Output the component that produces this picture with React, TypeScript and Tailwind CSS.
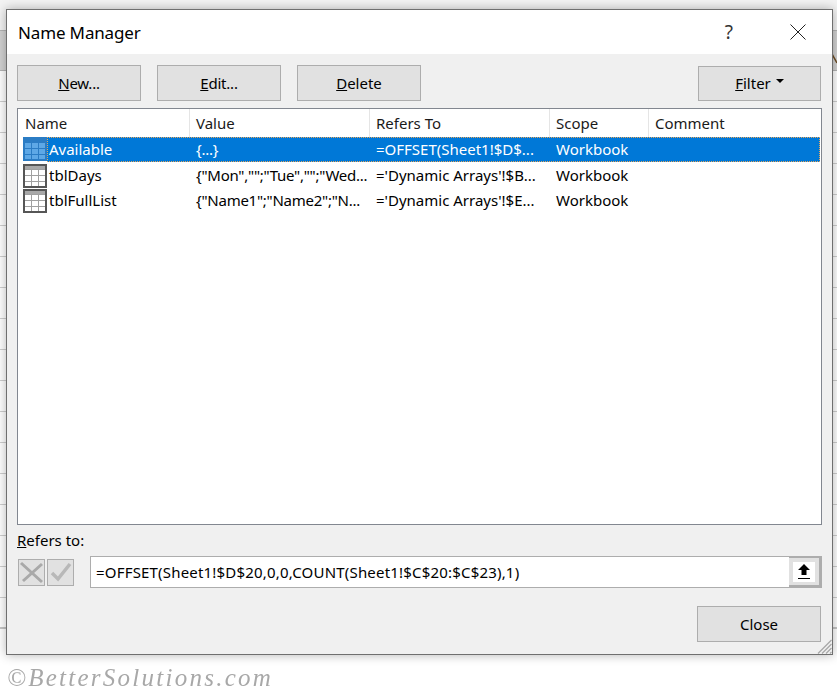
import React from 'react';

const rows = [
  { name: 'Available', value: '{...}', refers: '=OFFSET(Sheet1!$D$...', scope: 'Workbook', selected: true },
  { name: 'tblDays', value: '{"Mon","";"Tue","";"Wed...', refers: "='Dynamic Arrays'!$B...", scope: 'Workbook', selected: false },
  { name: 'tblFullList', value: '{"Name1";"Name2";"N...', refers: "='Dynamic Arrays'!$E...", scope: 'Workbook', selected: false },
];

const sheetRows = Array.from({ length: 17 }, (_, i) => i);
const sheetCols = [186, 96, 96, 96, 96, 96, 96];

const TableIcon: React.FC<{ selected: boolean }> = ({ selected }) => {
  const frame = selected ? '#2b7cc4' : '#565656';
  const head = selected ? '#2b7cc4' : '#a8a8a8';
  const cell = selected ? '#5ea8e6' : '#ffffff';
  const line = selected ? '#2b7cc4' : '#a0a0a0';
  return (
    <svg width="24" height="24" viewBox="0 0 24 24" className="shrink-0">
      <rect x="1" y="1" width="22" height="22" fill={cell} stroke={frame} strokeWidth="2" />
      <rect x="2" y="2" width="20" height="3" fill={head} />
      <path d="M2 5.5H22M2 11.5H22M2 17.5H22M8.5 5V22M15.5 5V22" stroke={line} fill="none" />
    </svg>
  );
};

const Btn: React.FC<{ className?: string; children: React.ReactNode }> = ({ className, children }) => (
  <button className={`bg-[#e1e1e1] border border-[#adadad] text-[15px] text-black flex items-center justify-center ${className ?? 'h-[36px] w-[124px]'}`}>
    {children}
  </button>
);

export default function App() {
  return (
    <div className="relative w-[837px] h-[693px] bg-white overflow-hidden" style={{ fontFamily: '"Noto Sans", "Open Sans", sans-serif' }}>
      {/* sheet behind the dialog */}
      <div className="flex flex-col">
        <div className="h-[30px] bg-[#f3f3f3]" />
        <div className="h-[41px] bg-[#d2d2d2] border-y border-[#b4b4b4]" />
        {sheetRows.map(i => (
          <div key={i} className="h-[31px] bg-white border-b border-[#cfcfcf]" />
        ))}
        <div className="h-[31px] flex bg-white border-b-2 border-[#c6c6c6]">
          <div className="w-[24px] border-r border-[#cfcfcf]" />
          {sheetCols.map((w, i) => (
            <div key={i} className="border-r border-[#cfcfcf]" style={{ width: w }} />
          ))}
        </div>
      </div>

      <svg width="5" height="10" viewBox="0 0 5 10" className="absolute left-[832px] top-[54px]">
        <path d="M0 0L5 9" stroke="#6b4a20" strokeWidth="1.5" fill="none" />
      </svg>

      {/* dialog */}
      <div className="absolute left-[6px] top-[9px] w-[827px] h-[646px] flex flex-col bg-[#f0f0f0] border border-[#6f6f6f] shadow-[0_0_10px_rgba(0,0,0,0.3)]">
        <div className="h-[44px] shrink-0 bg-white flex items-center pl-[11px]">
          <span className="text-[17px] text-black tracking-[-0.15px] pt-px">Name Manager</span>
          <span className="ml-auto text-[19px] text-[#333333] mr-[57px]">?</span>
          <svg width="16" height="16" viewBox="0 0 16 16" className="mr-[26px]">
            <path d="M0.5 0.5L15.5 15.5M15.5 0.5L0.5 15.5" stroke="#222222" fill="none" />
          </svg>
        </div>

        <div className="flex-1 flex flex-col pl-[10px] pr-[10px]">
          <div className="flex mt-[11px] gap-[16px]">
            <Btn><span className="tracking-[-0.2px]"><u>N</u>ew...</span></Btn>
            <Btn><span className="tracking-[-0.2px]"><u>E</u>dit...</span></Btn>
            <Btn><span><u>D</u>elete</span></Btn>
            <Btn className="ml-auto mt-px h-[35px] w-[123px] mr-px">
              <span><u>F</u>ilter</span>
              <svg width="8" height="4" viewBox="0 0 8 4" className="ml-[5px] mb-[5px]">
                <path d="M0 0H8L4 4Z" fill="#000000" />
              </svg>
            </Btn>
          </div>

          <div className="mt-[7px] h-[417px] bg-white border border-[#828790] flex flex-col">
            <div className="h-[28px] grid grid-cols-[172px_180px_180px_99px_1fr] text-[15px] text-[#1a1a1a] items-stretch">
              {['Name', 'Value', 'Refers To', 'Scope', 'Comment'].map((h, i) => (
                <div key={h} className={`pt-[3px] border-r border-[#e5e5e5] last:border-r-0 leading-[22px] ${i === 0 ? 'pl-[7px]' : 'pl-[6px]'}`}>{h}</div>
              ))}
            </div>
            {rows.map(r => (
              <div key={r.name} className={`flex pl-[5px] pr-px ${r.selected ? 'h-[26px] items-start' : 'h-[25px] items-center'}`}>
                <TableIcon selected={r.selected} />
                <div className={`flex-1 h-[25px] grid grid-cols-[142px_180px_180px_99px_1fr] items-center text-[15px] border border-dotted ${r.selected ? 'bg-[#0078d7] text-white border-[#e8a75a]' : 'text-black border-transparent'}`}>
                  <div className="pl-px whitespace-nowrap">{r.name}</div>
                  <div className="pl-[6px] whitespace-nowrap tracking-[-0.25px]">{r.value}</div>
                  <div className="pl-[6px] whitespace-nowrap">{r.refers}</div>
                  <div className="pl-[6px]">{r.scope}</div>
                  <div />
                </div>
              </div>
            ))}
          </div>

          <div className="mt-[3px] h-[24px] text-[15px] text-black leading-[24px]"><u>R</u>efers to:</div>

          <div className="mt-[4px] flex items-center">
            <div className="ml-px w-[27px] h-[27px] bg-[#e1e1e1] border border-[#adadad] flex items-center justify-center">
              <svg width="25" height="25" viewBox="0 0 25 25">
                <path d="M2 3L23 22M23 4L4 21" stroke="#a9a9a9" strokeWidth="3" fill="none" />
              </svg>
            </div>
            <div className="ml-[2px] w-[27px] h-[27px] bg-[#e1e1e1] border border-[#adadad] flex items-center justify-center">
              <svg width="22" height="20" viewBox="0 0 22 20">
                <path d="M2 11L8 17L20 2" stroke="#b8b8b8" strokeWidth="3.5" fill="none" />
              </svg>
            </div>
            <div className="ml-[16px] flex-1 h-[32px] bg-white border border-[#adadad] border-r-0 flex items-center pl-[5px] text-[15px] text-black">
              <span className="flex-1 tracking-[0.19px]">=OFFSET(Sheet1!$D$20,0,0,COUNT(Sheet1!$C$20:$C$23),1)</span>
              <div className="w-[33px] h-[32px] bg-[#e1e1e1] border-[2px] border-l-0 border-[#adadad] border-r-[3px] border-b-[3px] -my-px flex items-center justify-center">
                <div className="w-[22px] h-[20px] bg-white flex items-center justify-center">
                  <svg width="14" height="16" viewBox="0 0 14 16">
                    <path d="M7 0L13 6H9.5V11H4.5V6H1Z" fill="#000000" />
                    <rect x="1" y="14" width="12" height="1" fill="#000000" />
                  </svg>
                </div>
              </div>
            </div>
          </div>

          <div className="mt-[18px] flex justify-end pr-px">
            <Btn>Close</Btn>
          </div>
        </div>

        <svg width="15" height="15" viewBox="0 0 15 15" className="absolute right-0 bottom-0">
          <path d="M14.5 1L1 14.5M14.5 5L5 14.5M14.5 9L9 14.5M14.5 13L13 14.5" stroke="#a8a8a8" strokeWidth="1.3" fill="none" />
        </svg>
      </div>

      {/* watermark */}
      <div className="absolute left-[7px] top-[664px] text-[25px] italic tracking-[2.25px] text-[#a8a8a8] whitespace-nowrap leading-[28px] blur-[0.4px]" style={{ fontFamily: '"Liberation Serif", serif' }}>
        ©BetterSolutions.com
      </div>
    </div>
  );
}
